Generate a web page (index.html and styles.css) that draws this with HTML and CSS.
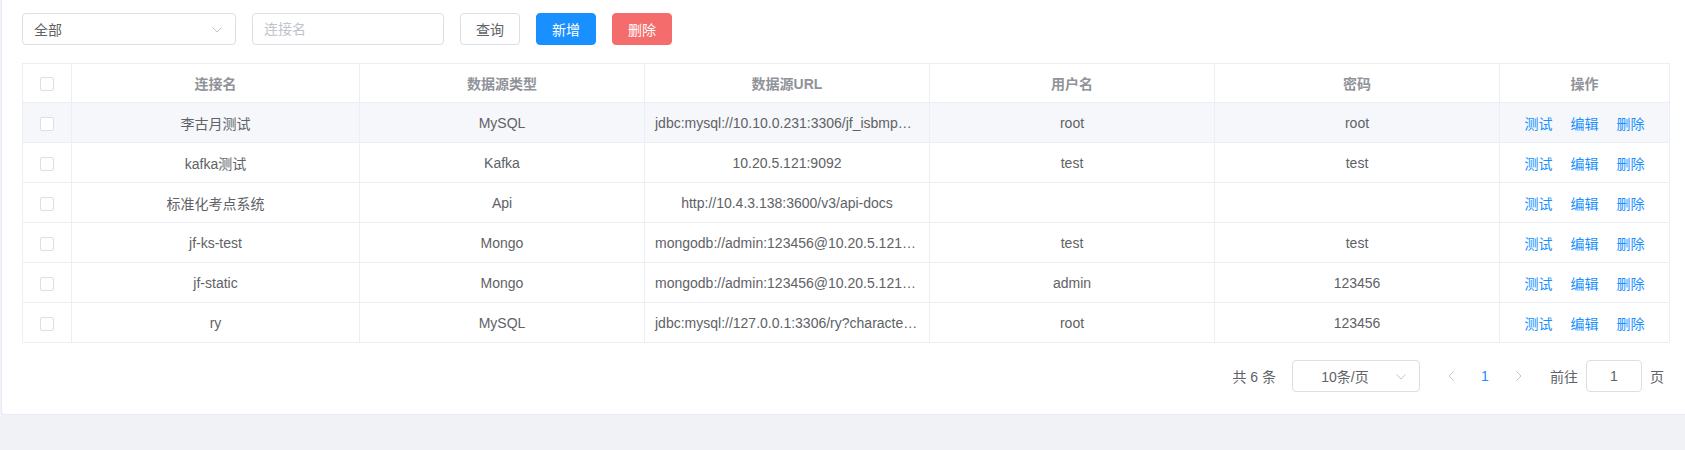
FILE: index.html
```html
<!DOCTYPE html>
<html lang="zh-CN">
<head>
<meta charset="utf-8">
<title>数据源管理</title>
<link rel="stylesheet" href="styles.css">
</head>
<body>
<div class="card">
  <div class="toolbar">
    <div class="select sel-type">
      <span class="sel-text">全部</span>
      <svg class="chev" width="10" height="6" viewBox="0 0 10 6"><path d="M0.5 0.5 L5 5 L9.5 0.5" fill="none" stroke="#c0c4cc" stroke-width="1"/></svg>
    </div>
    <input class="input inp-name" type="text" placeholder="连接名">
    <button class="btn">查询</button>
    <button class="btn primary">新增</button>
    <button class="btn danger">删除</button>
  </div>

  <table class="grid">
    <colgroup>
      <col class="c-check">
      <col class="c-name">
      <col class="c-std">
      <col class="c-std">
      <col class="c-std">
      <col class="c-std">
      <col class="c-ops">
    </colgroup>
    <thead>
      <tr>
        <th><span class="checkbox"></span></th>
        <th>连接名</th>
        <th>数据源类型</th>
        <th>数据源URL</th>
        <th>用户名</th>
        <th>密码</th>
        <th>操作</th>
      </tr>
    </thead>
    <tbody>
      <tr class="hover">
        <td><span class="checkbox"></span></td>
        <td>李古月测试</td>
        <td>MySQL</td>
        <td>jdbc:mysql://10.10.0.231:3306/jf_isbmp_test?useUnicode=true</td>
        <td>root</td>
        <td>root</td>
        <td><div class="ops"><span>测试</span><span>编辑</span><span>删除</span></div></td>
      </tr>
      <tr>
        <td><span class="checkbox"></span></td>
        <td>kafka测试</td>
        <td>Kafka</td>
        <td>10.20.5.121:9092</td>
        <td>test</td>
        <td>test</td>
        <td><div class="ops"><span>测试</span><span>编辑</span><span>删除</span></div></td>
      </tr>
      <tr>
        <td><span class="checkbox"></span></td>
        <td>标准化考点系统</td>
        <td>Api</td>
        <td>http://10.4.3.138:3600/v3/api-docs</td>
        <td></td>
        <td></td>
        <td><div class="ops"><span>测试</span><span>编辑</span><span>删除</span></div></td>
      </tr>
      <tr>
        <td><span class="checkbox"></span></td>
        <td>jf-ks-test</td>
        <td>Mongo</td>
        <td>mongodb://admin:123456@10.20.5.121:27017/jf-ks-test</td>
        <td>test</td>
        <td>test</td>
        <td><div class="ops"><span>测试</span><span>编辑</span><span>删除</span></div></td>
      </tr>
      <tr>
        <td><span class="checkbox"></span></td>
        <td>jf-static</td>
        <td>Mongo</td>
        <td>mongodb://admin:123456@10.20.5.121:27017/jf-static</td>
        <td>admin</td>
        <td>123456</td>
        <td><div class="ops"><span>测试</span><span>编辑</span><span>删除</span></div></td>
      </tr>
      <tr>
        <td><span class="checkbox"></span></td>
        <td>ry</td>
        <td>MySQL</td>
        <td>jdbc:mysql://127.0.0.1:3306/ry?characterEncoding=utf8</td>
        <td>root</td>
        <td>123456</td>
        <td><div class="ops"><span>测试</span><span>编辑</span><span>删除</span></div></td>
      </tr>
    </tbody>
  </table>

  <div class="pager">
    <span class="total">共 6 条</span>
    <div class="select sel-size">
      <span class="sel-text">10条/页</span>
      <svg class="chev" width="10" height="6" viewBox="0 0 10 6"><path d="M0.5 0.5 L5 5 L9.5 0.5" fill="none" stroke="#c0c4cc" stroke-width="1"/></svg>
    </div>
    <span class="pbtn prev"><svg width="6" height="10" viewBox="0 0 6 10"><path d="M5.5 0.5 L1 5 L5.5 9.5" fill="none" stroke="#c0c4cc" stroke-width="1"/></svg></span>
    <span class="pnum">1</span>
    <span class="pbtn next"><svg width="6" height="10" viewBox="0 0 6 10"><path d="M0.5 0.5 L5 5 L0.5 9.5" fill="none" stroke="#c0c4cc" stroke-width="1"/></svg></span>
    <span class="jump-label">前往</span>
    <span class="jump-input">1</span>
    <span class="jump-label">页</span>
  </div>
</div>
</body>
</html>
```

FILE: styles.css
```css
html, body {
  margin: 0;
  padding: 0;
  overflow: hidden;
}
body {
  background: #f0f2f5;
  font-family: "Liberation Sans", Arial, "Noto Sans CJK SC", sans-serif;
  font-size: 14px;
  color: #606266;
}
.card {
  margin-left: 1px;
  background: #fff;
  border-left: 1px solid #e6ebf5;
  border-bottom: 1px solid #e6ebf5;
  border-bottom-left-radius: 4px;
  padding: 13px 15px 22px 20px;
}
.toolbar {
  display: flex;
  align-items: center;
  gap: 16px;
  height: 32px;
  margin-bottom: 18px;
}
.select {
  box-sizing: border-box;
  height: 32px;
  border: 1px solid #dcdfe6;
  border-radius: 4px;
  display: flex;
  align-items: center;
  position: relative;
  background: #fff;
}
.sel-type {
  width: 214px;
  padding: 0 30px 0 11px;
}
.sel-text {
  flex: 1;
  color: #606266;
  white-space: nowrap;
}
.chev {
  position: absolute;
  right: 13px;
  top: 13px;
}
.input {
  box-sizing: border-box;
  width: 192px;
  height: 32px;
  border: 1px solid #dcdfe6;
  border-radius: 4px;
  padding: 0 11px;
  font: inherit;
  color: #606266;
  outline: none;
  margin: 0;
}
.input::placeholder {
  color: #c0c4cc;
}
.btn {
  box-sizing: border-box;
  width: 60px;
  height: 32px;
  border: 1px solid #dcdfe6;
  border-radius: 4px;
  background: #fff;
  color: #606266;
  font: inherit;
  padding: 0;
  margin: 0;
}
.btn.primary {
  background: #1890ff;
  border-color: #1890ff;
  color: #fff;
}
.btn.danger {
  background: #f56c6c;
  border-color: #f56c6c;
  color: #fff;
}

.grid {
  width: 1648px;
  table-layout: fixed;
  border-collapse: separate;
  border-spacing: 0;
  border-top: 1px solid #ebeef5;
  border-left: 1px solid #ebeef5;
}
.c-check { width: 49px; }
.c-name { width: 288px; }
.c-std { width: 285px; }
.c-ops { width: 170px; }
.grid th,
.grid td {
  box-sizing: border-box;
  border-right: 1px solid #ebeef5;
  border-bottom: 1px solid #ebeef5;
  padding: 0 10px;
  text-align: center;
  white-space: nowrap;
  overflow: hidden;
  text-overflow: ellipsis;
}
.grid th {
  height: 39px;
  color: #909399;
  font-weight: bold;
}
.grid td {
  height: 40px;
  color: #606266;
}
.grid tr.hover td {
  background: #f5f7fa;
}
.checkbox {
  display: inline-block;
  box-sizing: border-box;
  width: 14px;
  height: 14px;
  border: 1px solid #dcdfe6;
  border-radius: 2px;
  background: #fff;
  vertical-align: middle;
}
.ops {
  display: inline-flex;
  gap: 18px;
  color: #1890ff;
  vertical-align: middle;
}

.pager {
  display: flex;
  justify-content: flex-end;
  align-items: center;
  height: 32px;
  margin-top: 17px;
  padding-right: 6px;
}
.total {
  margin-right: 16px;
  white-space: pre;
}
.sel-size {
  width: 128px;
  padding: 0 30px 0 8px;
  text-align: center;
}
.pbtn,
.pnum {
  width: 34px;
  height: 32px;
  display: flex;
  align-items: center;
  justify-content: center;
}
.prev {
  margin-left: 14px;
}
.pnum {
  color: #1890ff;
}
.jump-label {
  white-space: nowrap;
}
.next + .jump-label {
  margin-left: 14px;
}
.jump-input {
  box-sizing: border-box;
  width: 56px;
  height: 32px;
  margin: 0 8px;
  border: 1px solid #dcdfe6;
  border-radius: 4px;
  display: flex;
  align-items: center;
  justify-content: center;
  color: #606266;
}
```
